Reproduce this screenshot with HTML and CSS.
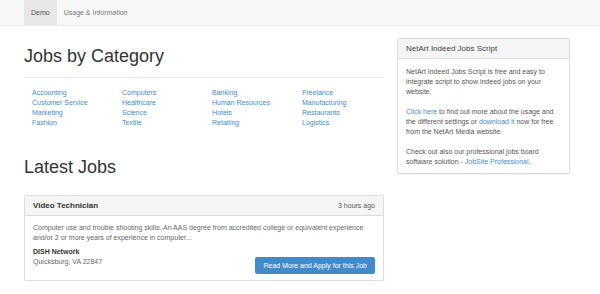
FILE: index.html
```html
<!DOCTYPE html>
<html lang="en">
<head>
    <meta charset="UTF-8">
    <meta name="viewport" content="width=device-width, initial-scale=1.0">
    <title>NetArt Indeed Jobs Script - Demo</title>
    <link rel="stylesheet" href="styles.css">
</head>
<body>

    <div class="navbar">
        <a href="#" class="nav-item active">Demo</a>
        <a href="#" class="nav-item">Usage &amp; Information</a>
    </div>

    <div class="container">
        <div class="main">
            <h1>Jobs by Category</h1>
            <hr>

            <div class="categories">
                <a href="#">Accounting</a>
                <a href="#">Computers</a>
                <a href="#">Banking</a>
                <a href="#">Freelance</a>
                <a href="#">Customer Service</a>
                <a href="#">Healthcare</a>
                <a href="#">Human Resources</a>
                <a href="#">Manufacturing</a>
                <a href="#">Marketing</a>
                <a href="#">Science</a>
                <a href="#">Hotels</a>
                <a href="#">Restaurants</a>
                <a href="#">Fashion</a>
                <a href="#">Textile</a>
                <a href="#">Retailing</a>
                <a href="#">Logistics</a>
            </div>

            <h1 class="latest">Latest Jobs</h1>

            <div class="panel job">
                <div class="panel-heading">
                    <span class="job-title">Video Technician</span>
                    <span class="job-date">3 hours ago</span>
                </div>
                <div class="panel-body">
                    <p class="job-desc">Computer use and trouble shooting skills. An AAS degree from accredited college or equivalent experience and/or 2 or more years of experience in computer...</p>
                    <div class="job-footer">
                        <div>
                            <div class="company">DISH Network</div>
                            <div class="location">Quicksburg, VA 22847</div>
                        </div>
                        <a href="#" class="btn">Read More and Apply for this Job</a>
                    </div>
                </div>
            </div>
        </div>

        <div class="sidebar">
            <div class="panel">
                <div class="panel-heading side-title">NetArt Indeed Jobs Script</div>
                <div class="panel-body side-body">
                    <p>NetArt Indeed Jobs Script is free and easy to integrate script to show indeed jobs on your website.</p>
                    <p><a href="#">Click here</a> to find out more about the usage and the different settings or <a href="#">download it</a> now for free from the NetArt Media website.</p>
                    <p>Check out also our professional jobs board software solution - <a href="#">JobSite Professional</a>.</p>
                </div>
            </div>
        </div>
    </div>

</body>
</html>
```

FILE: styles.css
```css
body {
    font-family: 'Liberation Sans', Arial, sans-serif;
    font-size: 7px;
    line-height: 10px;
    color: #333;
    background-color: #fff;
    margin: 0;
    padding: 0;
}

a {
    color: #428bca;
    text-decoration: none;
}

.navbar {
    display: flex;
    height: 25px;
    padding-left: 24px;
    background-color: #f8f8f8;
    border-bottom: 1px solid #e7e7e7;
}

.nav-item {
    line-height: 25px;
    padding: 0 7px;
    color: #777;
}

.nav-item.active {
    background-color: #e7e7e7;
    color: #555;
}

.container {
    display: grid;
    grid-template-columns: 360px 173px;
    column-gap: 13px;
    padding-left: 24px;
}

h1 {
    font-size: 18px;
    font-weight: normal;
    line-height: 20px;
    margin: 20px 0 0;
}

hr {
    border: none;
    border-top: 1px solid #eee;
    margin: 11px 0 10px;
}

.categories {
    display: grid;
    grid-template-columns: repeat(4, 90px);
    padding-left: 8px;
}

h1.latest {
    margin-top: 29px;
}

.panel {
    border: 1px solid #ddd;
    border-radius: 2px;
    background-color: #fff;
    box-shadow: 0 1px 1px rgba(0, 0, 0, 0.05);
}

.job {
    margin-top: 18px;
}

.panel-heading {
    display: flex;
    justify-content: space-between;
    align-items: center;
    height: 19px;
    padding: 0 8px;
    background-color: #f5f5f5;
    border-bottom: 1px solid #ddd;
}

.job-title {
    font-size: 8px;
    font-weight: bold;
}

.job-date {
    color: #555;
}

.panel-body {
    padding: 7px 8px 6px;
}

.job-desc {
    margin: 0 0 4px;
    color: #666;
}

.job-footer {
    display: flex;
    justify-content: space-between;
    align-items: flex-start;
}

.company {
    font-weight: bold;
}

.location {
    color: #666;
}

.btn {
    display: block;
    line-height: 17px;
    padding: 0 8px;
    margin-top: 10px;
    background-color: #428bca;
    color: #fff;
    border-radius: 2px;
}

.sidebar {
    padding-top: 12px;
}

.side-title {
    font-size: 8px;
    color: #444;
}

.side-body {
    padding: 8px 8px 6px;
    color: #555;
}

.side-body p {
    margin: 0 0 10px;
}

.side-body p:last-child {
    margin-bottom: 0;
}
```
